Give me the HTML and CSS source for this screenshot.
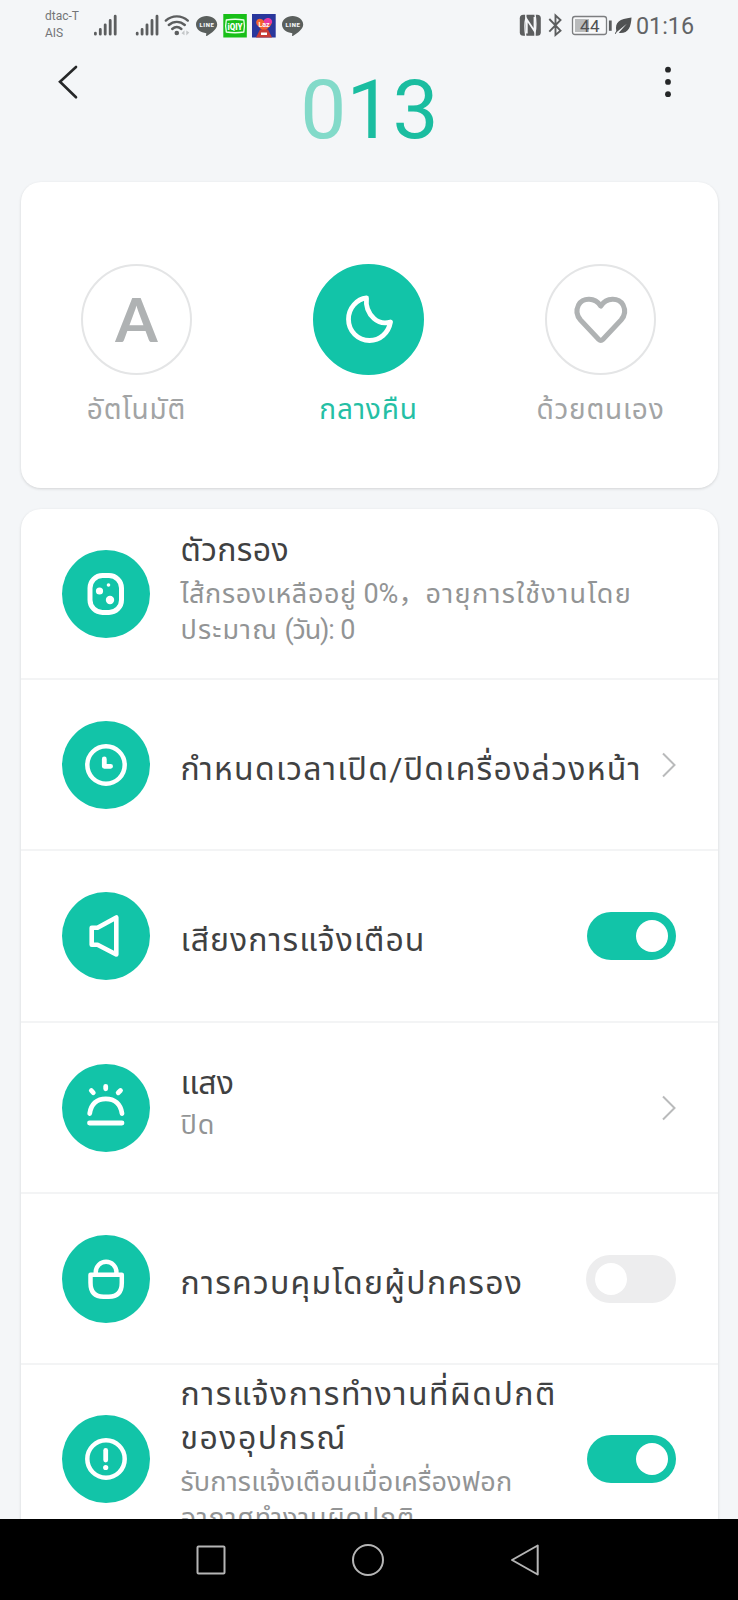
FILE: index.html
```
<!DOCTYPE html>
<html lang="th">
<head>
<meta charset="utf-8">
<title>013</title>
<link rel="stylesheet" href="styles.css">
</head>
<body>
<div class="screen">
  <header class="status">
    <div class="carriers"><span>dtac-T</span><span>AIS</span></div>
    <svg class="status-left" width="212" height="30" viewBox="92 10 212 30">
      <g stroke="#5c5e5f" stroke-width="2.8" stroke-linecap="round">
        <path d="M95.4 33.2v1M100.3 29.5v4.7M105.2 24.8v9.4M110.2 20.5v13.7M115.2 16.2v18"/>
        <path d="M137.2 33.2v1M142.1 29.5v4.7M147 24.8v9.4M152 20.5v13.7M157 16.2v18"/>
      </g>
      <g fill="none" stroke="#5c5e5f" stroke-width="2.4" stroke-linecap="round">
        <path d="M165.8 20.6c6.200-5.600 15.800-5.600 22 0M168.8 25c4.700-4.200 11.300-4.200 16 0M172.200 29c2.800-2.400 6.400-2.400 9.200 0"/>
      </g>
      <circle cx="176.800" cy="33" r="2.300" fill="#5c5e5f"/>
      <path d="M184.500 30.300v5l-3-2zM186.300 35.500v-5l3 2z" fill="#c3c6c8"/>
      <g fill="#5a5f5d">
        <path id="bubble" d="M206.600 16c5.900 0 10.600 3.800 10.600 8.600 0 4.600-5.400 8.400-10.300 11.400-.6.300-.9-.1-.8-.8l.2-2c-5.700-.2-10.300-4-10.300-8.600 0-4.800 4.700-8.600 10.600-8.600z"/>
        <use href="#bubble" x="86"/>
      </g>
      <g class="line-logo"><text x="199.400" y="27.200" textLength="14.400">LINE</text><text x="285.400" y="27.200" textLength="14.400">LINE</text></g>
      <rect x="223.300" y="14" width="23.500" height="23.500" fill="#18bf18"/>
      <path d="M226.300 20q8.700-1.500 17.500 0 1.300 6-.0 12-8.700 1.500-17.500 0-1.300-6 0-12z" fill="none" stroke="#eaffea" stroke-width="1.300"/>
      <text class="iqiyi" x="227.500" y="29.800" textLength="15" lengthAdjust="spacingAndGlyphs">iQIY</text>
      <rect x="252" y="14" width="23.700" height="23.500" fill="#29379c"/>
      <path d="M264 32l-7-7c-3-5 3-9 7-4 4-5 10-1 7 4z" fill="#f4642f"/>
      <path d="M264 20c4-4 9-1 8 3l-8 5z" fill="#e838a0"/>
      <path d="M256 37.500l4-8h8l4 8z" fill="#c83a35"/>
      <path d="M261 32.500h6v2.500h-6z" fill="#fff"/>
      <text class="laz" x="258.500" y="26.500">Laz</text>
    </svg>
    <svg class="status-right" width="118" height="30" viewBox="515 10 118 30">
      <rect x="519.800" y="14.800" width="21" height="21" rx="3.500" fill="#5c5e5f"/>
      <path d="M525.800 14v4.500c-1.300 5-1.300 9.500 0 18M535 36.500V32.200c1.300-5 1.300-9.500 0-18" fill="none" stroke="#f4f6f8" stroke-width="1.400"/>
      <path d="M526.800 33.500V19.500l7.700 11.500V17" fill="none" stroke="#f4f6f8" stroke-width="1.800"/>
      <path d="M549.300 19l11.200 11.700-5 4.300V15.500l5 4.500-11.200 11.700" fill="none" stroke="#5c5e5f" stroke-width="1.900"/>
      <rect x="572.500" y="16.500" width="34" height="18" rx="2.500" fill="#f8f9fa" stroke="#7c7e80" stroke-width="1.300"/>
      <rect x="575" y="19" width="14" height="13" fill="#b9bbbc"/>
      <path d="M610.300 20.500v10.300" stroke="#5c5e5f" stroke-width="2.800"/>
      <text class="battery-text" x="580" y="31.500" textLength="19.500">44</text>
      <path d="M616.300 31c-1.500-9 3-12 15.200-13.500-.5 9.500-3 15.800-11.500 15.500l-1.200-.3 8-9-10 8.300-1.200 2-.8-.5z" fill="#505253"/>
    </svg>
    <span class="clock">01:16</span>
  </header>

  <div class="titlebar">
    <svg width="22" height="36" viewBox="0 0 22 36"><path d="M20 3L4 17.800l16 15.500" fill="none" stroke="#252728" stroke-width="2.600" stroke-linecap="round"/></svg>
    <h1 class="reading"><span class="lead">0</span>13</h1>
    <svg width="8" height="36" viewBox="0 0 8 36" fill="#252728"><circle cx="4" cy="5.700" r="2.900"/><circle cx="4" cy="17.900" r="2.900"/><circle cx="4" cy="30.200" r="2.900"/></svg>
  </div>

  <section class="card modes">
    <div class="mode">
      <div class="mode-disc"><span class="letter">A</span></div>
      <span class="mode-label">อัตโนมัติ</span>
    </div>
    <div class="mode active">
      <div class="mode-disc"><svg width="110" height="110" viewBox="0 0 110 110"><path d="M52.500 33C43 34 34.500 43 34.500 54.300 34.500 66.300 44 75.500 55.500 75.500c10.500 0 19-7.500 21-18.500-5.500 1.700-11.500 1-16.500-3.500-6-5.500-8.500-12-7.500-20.500z" fill="none" stroke="#fff" stroke-width="4.800" stroke-linejoin="round"/></svg></div>
      <span class="mode-label">กลางคืน</span>
    </div>
    <div class="mode">
      <div class="mode-disc"><svg width="110" height="110" viewBox="0 0 110 110"><path d="M54.800 41C49 32.300 37 32.300 32.500 40c-3 6-1.500 11 2 15l18.300 19.500q2 2 4 0L75.100 55c3.500-4 5-9 2-15C72.500 32.300 60.600 32.300 54.800 41z" fill="none" stroke="#afb2b3" stroke-width="5" stroke-linejoin="round"/></svg></div>
      <span class="mode-label">ด้วยตนเอง</span>
    </div>
  </section>

  <section class="card list">
    <div class="row first">
      <svg class="icon" viewBox="0 0 88 88"><rect x="28" y="25.500" width="31.500" height="37" rx="12.500" stroke-width="5"/><g class="solid"><circle cx="37.500" cy="41" r="3.600"/><circle cx="48" cy="50" r="4.200"/><circle cx="46.500" cy="35" r="1.800"/></g></svg>
      <div class="body">
        <div class="title"><span class="t1">ตัวกรอง</span></div>
        <div class="sub"><span class="s1">ไส้กรองเหลืออยู่</span> 0%<span class="comma">，</span><span class="s1b">อายุการใช้งานโดย</span></div>
        <div class="sub"><span class="s2">ประมาณ</span> <span class="s2b">(วัน):</span> <span class="s2b">0</span></div>
      </div>
    </div>
    <div class="row single">
      <svg class="icon" viewBox="0 0 88 88"><circle cx="44" cy="44" r="18.700" stroke-width="4.500"/><path d="M42.300 38v7.300h6.300" stroke-width="4.800"/></svg>
      <div class="body"><div class="title"><span class="t2">กำหนดเวลาเปิด/ปิดเครื่องล่วงหน้า</span></div></div>
      <svg class="chevron" viewBox="0 0 14 26"><path d="M1 1.500L12.500 13 1 24.500"/></svg>
    </div>
    <div class="row single">
      <svg class="icon" viewBox="0 0 88 88"><path d="M29.700 35.700h5.800l18.800-10.200v37L35.500 52.700h-5.800z" stroke-width="4.600"/></svg>
      <div class="body"><div class="title"><span class="t3">เสียงการแจ้งเตือน</span></div></div>
      <div class="switch on"><i></i></div>
    </div>
    <div class="row two">
      <svg class="icon" viewBox="0 0 88 88"><path d="M27.500 59h32.500M27.700 49.500c1.300-9.500 7.300-14.700 16.100-14.700s14.900 5.200 16.200 14.700" stroke-width="4.800"/><path d="M43.700 22.300v2.500M29.300 26.500l2 2.300M58.500 26.500l-2.300 2.300" stroke-width="4.800"/></svg>
      <div class="body">
        <div class="title"><span>แสง</span></div>
        <div class="sub"><span class="s3">ปิด</span></div>
      </div>
      <svg class="chevron" viewBox="0 0 14 26"><path d="M1 1.500L12.500 13 1 24.500"/></svg>
    </div>
    <div class="row single">
      <svg class="icon" viewBox="0 0 88 88"><path d="M28.500 39.700h31.300v8q0 14-13 14h-5.300q-13 0-13-14zM33.800 39.500v-2.500a10.300 10.300 0 0 1 20.600 0v2.500" stroke-width="4.500"/></svg>
      <div class="body"><div class="title"><span class="t5">การควบคุมโดยผู้ปกครอง</span></div></div>
      <div class="switch"><i></i></div>
    </div>
    <div class="row last">
      <svg class="icon" viewBox="0 0 88 88"><circle cx="44" cy="44" r="18.700" stroke-width="4.500"/><path d="M43.700 35.500v9.500" stroke-width="4.800"/><circle class="solid" cx="43.700" cy="52.500" r="2.600"/></svg>
      <div class="body">
        <div class="title"><span class="t6">การแจ้งการทำงานที่ผิดปกติ</span></div>
        <div class="title"><span class="t7">ของอุปกรณ์</span></div>
        <div class="sub"><span class="s4">รับการแจ้งเตือนเมื่อเครื่องฟอก</span></div>
        <div class="sub"><span class="s5">อากาศทำงานผิดปกติ</span></div>
      </div>
      <div class="switch on"><i></i></div>
    </div>
  </section>

  <nav class="navbar">
    <svg width="30" height="32" viewBox="0 0 30 32"><rect x="1.500" y="2.500" width="27" height="27" rx="1"/></svg>
    <svg width="32" height="32" viewBox="0 0 32 32"><circle cx="16" cy="16" r="15"/></svg>
    <svg width="30" height="32" viewBox="0 0 30 32"><path d="M27.700 1.500v29L2 16z"/></svg>
  </nav>
</div>
</body>
</html>
```

FILE: styles.css
```
* { box-sizing: border-box; }
body { margin: 0; background: #f4f6f8; font-family: Roboto, "Noto Sans Thai", "Noto Sans", sans-serif; }
svg { display: block; flex: none; }
.screen { width: 738px; height: 1600px; overflow: hidden; display: flex; flex-direction: column; }

.status { height: 54px; flex: none; display: flex; align-items: flex-start; padding: 10px 0 0 45px; color: #5c5e5f; }
.carriers { width: 47px; display: flex; flex-direction: column; font-size: 12px; line-height: 16.500px; margin-top: -2px; color: #737577; }
.status-right { margin-left: 211px; }
.line-logo { fill: #f4f6f8; font: 900 6px Roboto, sans-serif; }
.iqiyi { fill: #fff; font: 900 9.500px Roboto, sans-serif; }
.laz { fill: #ffe; font: 700 7px Roboto, sans-serif; }
.battery-text { fill: #505253; font: 17px Roboto, sans-serif; }
.clock { font-size: 23.300px; line-height: 32px; margin-left: 3px; color: #626466; }

.titlebar { height: 128px; flex: none; display: flex; justify-content: space-between; align-items: flex-start; padding: 10px 66px 0 56px; }
.reading { margin: 1px 3px 0 0; font-size: 82px; line-height: 90px; font-weight: 400; color: #1abda0; }
.reading .lead { color: #82dac9; }

.card { margin: 0 20px 0 21px; background: #fff; border-radius: 20px; box-shadow: 0 1px 3px rgba(0, 0, 0, .14); flex: none; }
.modes { height: 306px; margin-bottom: 21px; padding: 82px 2px 0 0; display: flex; justify-content: space-between; }
.mode { width: 231px; display: flex; flex-direction: column; align-items: center; color: #a2a4a5; }
.mode-disc { width: 111px; height: 111px; border: 2px solid #e4e5e6; border-radius: 50%; display: flex; align-items: center; justify-content: center; }
.mode-disc svg { margin: -2px; }
.active .mode-disc { background: #12c4a8; border-color: #12c4a8; }
.active { color: #25bfa5; }
.letter { font: 700 61px/61px Lato, sans-serif; color: #afb2b3; margin-bottom: 3px; }
.mode-label { font-size: 28px; line-height: 36px; margin-top: 17px; letter-spacing: .8px; white-space: nowrap; }

.list { height: 1060px; flex: none; }
.row { height: 171.300px; display: flex; align-items: center; padding: 1px 42px 0 40.500px; border-bottom: 2px solid #f3f4f5; }
.row.first { height: 171px; padding-top: 0; }
.row.last { height: 188px; border: 0; padding-top: 0; }
.icon { width: 88px; height: 88px; border-radius: 50%; background: #12c4a8; fill: none; stroke: #fff; stroke-linecap: round; stroke-linejoin: round; }
.icon .solid { fill: #fff; stroke: none; }
.body { flex: 1; min-width: 0; margin-left: 31px; white-space: nowrap; }
.single .body { padding-top: 7px; }
.first .body { padding-bottom: 11px; }
.two .body { padding-bottom: 12px; }
.last .body { padding-bottom: 11px; }
.title { font-size: 32px; line-height: 44px; height: 44px; color: #3f4142; }
.sub { font-size: 27px; line-height: 36px; height: 36px; color: #929495; }
.title + .sub { margin-top: 4px; }
.two .title + .sub { margin-top: 2px; }
.t1 { letter-spacing: .35px; }
.t2 { letter-spacing: 1.280px; }
.t3 { letter-spacing: 1.050px; }
.t5 { letter-spacing: 1.250px; }
.t6 { letter-spacing: 1.480px; }
.t7 { letter-spacing: 1.450px; }
.s1 { letter-spacing: .6px; }
.s1b { letter-spacing: 1.350px; }
.s2 { letter-spacing: 1.100px; }
.s2b { letter-spacing: -1.200px; }
.s3 { letter-spacing: .8px; }
.s4 { letter-spacing: .18px; }
.s5 { letter-spacing: .75px; }
.comma { font-family: "Noto Sans CJK SC", sans-serif; line-height: 1; }
.chevron { width: 14px; height: 26px; fill: none; stroke: #b9babb; stroke-width: 2; }
.switch { width: 90px; height: 48px; border-radius: 24px; background: #ededee; padding: 8px 9px; display: flex; flex: none; }
.switch i { width: 32px; height: 32px; border-radius: 50%; background: #fff; }
.switch.on { background: #12c4a8; justify-content: flex-end; padding-right: 8px; width: 89px; }

.navbar { position: absolute; left: 0; top: 1519px; width: 738px; height: 81px; background: #000; display: flex; justify-content: space-between; align-items: center; padding: 0 198px 0 196px; }
.navbar svg { fill: none; stroke: #b5b5b5; stroke-width: 2; stroke-linejoin: round; }
```
